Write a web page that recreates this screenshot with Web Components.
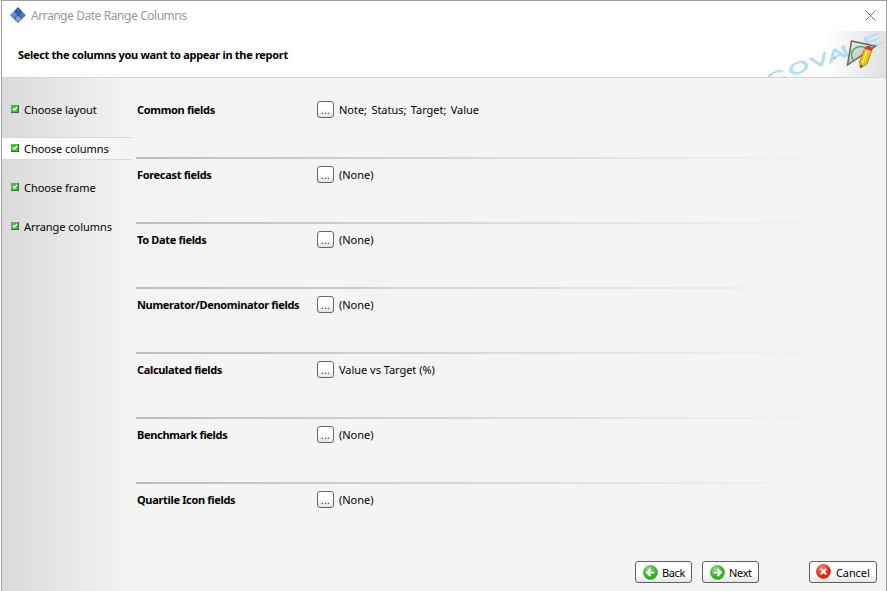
<!DOCTYPE html>
<html lang="en">
<head>
<meta charset="utf-8">
<title>Arrange Date Range Columns</title>
<style>
  body {
    margin: 0;
    background: #ffffff;
    font: 11px/16px "Noto Sans", "Open Sans", sans-serif;
    color: #000000;
    overflow: hidden;
  }
</style>
</head>
<body>
<wizard-window>
  <title-bar slot="title">Arrange Date Range Columns</title-bar>
  <wizard-banner slot="banner">Select the columns you want to appear in the report</wizard-banner>
  <wizard-step slot="steps">Choose layout</wizard-step>
  <wizard-step slot="steps" active>Choose columns</wizard-step>
  <wizard-step slot="steps">Choose frame</wizard-step>
  <wizard-step slot="steps">Arrange columns</wizard-step>
  <field-row label="Common fields" list>Note; Status; Target; Value</field-row>
  <field-row label="Forecast fields">(None)</field-row>
  <field-row label="To Date fields">(None)</field-row>
  <field-row label="Numerator/Denominator fields">(None)</field-row>
  <field-row label="Calculated fields">Value vs Target (%)</field-row>
  <field-row label="Benchmark fields">(None)</field-row>
  <field-row label="Quartile Icon fields">(None)</field-row>
  <wizard-button slot="buttons" icon="back">Back</wizard-button>
  <wizard-button slot="buttons" icon="next">Next</wizard-button>
  <wizard-button slot="buttons" icon="cancel">Cancel</wizard-button>
</wizard-window>

<script>
const define = (name, html, setup) => {
  const template = document.createElement('template');
  template.innerHTML = html;
  window.customElements.define(name, class extends HTMLElement {
    constructor() {
      super();
      this.attachShadow({mode: 'open'});
      this.shadowRoot.appendChild(template.content.cloneNode(true));
    }

    connectedCallback() {
      if (setup) setup(this, this.shadowRoot);
    }
  });
};

define('wizard-window', `
    <style>
      :host {
        display: grid;
        grid-template-rows: 30px 47px 1fr;
        box-sizing: border-box;
        height: 591px;
        margin-left: 1px;
        border: 1px solid #a0a0a0;
        border-bottom: 0;
        background: #f4f4f4;
      }
      .content { display: grid; grid-template-columns: 130px 1fr; }
      nav {
        display: flex;
        flex-direction: column;
        gap: 16px;
        padding-top: 20px;
        background: linear-gradient(to right, #dadada, #f4f4f4);
      }
      main { display: flex; flex-direction: column; padding: 16px 9px 8px 4px; }
      footer { display: flex; gap: 10px; margin-top: auto; justify-content: flex-end; }
      ::slotted([icon="cancel"]) { margin-left: 40px; }
    </style>
    <slot name="title"></slot>
    <slot name="banner"></slot>
    <div class="content">
      <nav><slot name="steps"></slot></nav>
      <main>
        <slot></slot>
        <footer><slot name="buttons"></slot></footer>
      </main>
    </div>`);

define('title-bar', `
    <style>
      :host {
        display: flex;
        align-items: center;
        padding: 0 10px 2px 8px;
        background: #ffffff;
        color: #999999;
        font-size: 12px;
      }
      span { flex: 1; margin-left: 5px; padding-top: 2px; letter-spacing: -0.48px; word-spacing: 0.3px; }
      svg { display: block; }
    </style>
    <svg width="16" height="16" viewBox="0 0 16 16">
      <path d="M8 .3 15.700 8 8 15.700 .3 8z" fill="#4576b8"/>
      <path d="M8 .3 12 4.200 8 8 4.200 4.200z" fill="#2c64b4"/>
      <path d="M4.100 4.200 8 8 4.100 11.800 .3 8z" fill="#5f92d2"/>
      <path d="M8 8l4 4-4 3.700L4.100 12z" fill="#7d9fcb"/>
      <path d="M4.500 5.500C6 5 7 6 8 8c1 2 2.500 3 4 2.500M10.500 4C11 6 10 7 8 8S5 10 5.500 12" fill="none" stroke="#1d488c" stroke-width=".8"/>
      <path d="M.5 8.300 8 15.600 15.500 8.300" fill="none" stroke="#777" stroke-width=".7"/>
    </svg>
    <span><slot></slot></span>
    <svg width="11" height="11" viewBox="0 0 11 11"><path d="M.5.5l10 10M10.500.5l-10 10" stroke="#777"/></svg>`);

define('wizard-banner', `
    <style>
      :host {
        display: flex;
        align-items: center;
        justify-content: space-between;
        box-sizing: border-box;
        padding-left: 16px;
        border-bottom: 1px solid #d4d4d4;
        background: #ffffff;
        font-weight: bold;
      }
      span { padding-top: 2px; letter-spacing: -0.31px; }
      svg { display: block; }
      text { font: 16px "Liberation Sans", sans-serif; fill: #b4def5; stroke: #b4def5; stroke-width: 0.7px; }
    </style>
    <span><slot></slot></span>
    <svg width="130" height="46" viewBox="0 0 130 46">
      <defs>
        <linearGradient id="shade"><stop stop-color="#fff"/><stop offset="1" stop-color="#e0e0e0"/></linearGradient>
        <linearGradient id="metal" x2="1" y2="1"><stop stop-color="#eee"/><stop offset="1" stop-color="#aaa"/></linearGradient>
      </defs>
      <path d="M70 0h60v46H70z" fill="url(#shade)"/>
      <text transform="translate(12 55) rotate(-22) scale(1.700 1)" x="0.500 14.500 28.300 38.500 47.500 61.500" y="0 0 1 2 2 3">COVALE</text>
      <circle cx="79" cy="27.500" r="1.300" fill="#f6a0a0"/>
      <path d="M95.500 10 119.500 15 91.500 34z" fill="url(#metal)" stroke="#666" stroke-width="1.500"/>
      <path d="M97 29C92 19 101 13 110 17" fill="none" stroke="#28b828" stroke-width="1.300"/>
      <path d="M108.500 18 115.500 20 111 33 104.500 37 103.500 31z" fill="#f5c400" stroke="#88640d" stroke-width=".7"/>
      <path d="M111 20 106.500 32" stroke="#fff06a" stroke-width="1.700"/>
      <path d="M108.500 18.500q1-4.500 5-3.500 4 1 2.500 5.500z" fill="#df3b25"/>
      <path d="M108.500 18.500 115.500 20.500" stroke="#d8d8d8"/>
      <path d="M104 33.500 107.500 35 104.500 37z" fill="#555"/>
    </svg>`);

define('wizard-step', `
    <style>
      :host {
        display: flex;
        align-items: center;
        gap: 5px;
        box-sizing: border-box;
        height: 23px;
        padding-left: 9px;
        border: solid transparent;
        border-width: 1px 0;
        letter-spacing: -0.05px;
        white-space: nowrap;
      }
      :host([active]) {
        border-color: #d8d8d8;
        background: linear-gradient(to right, #ffffff, #f4f4f4);
      }
      svg { display: block; margin-top: -2px; }
    </style>
    <svg width="8" height="8" viewBox="0 0 8 8">
      <path d="M0 0h8v8H0z" fill="#247b20"/>
      <path d="M0 0h7v7H0z" fill="#4fba42"/>
      <path d="M2 3.500 3.500 5 6 2" fill="none" stroke="#fff" stroke-width="1.300"/>
    </svg>
    <span><slot></slot></span>`);

define('field-row', `
    <style>
      :host {
        display: grid;
        grid-template-columns: 181px 17px 1fr;
        align-items: start;
        box-sizing: border-box;
        height: 65px;
        padding-top: 7px;
      }
      :host(:not(:nth-of-type(7))) {
        background: linear-gradient(to right, #bdbdbd, #f4f4f4) 0 100% / 686px 2px no-repeat;
      }
      :host([list]) span { word-spacing: 1.6px; }
      b { padding-left: 1px; letter-spacing: -0.33px; line-height: 18px; }
      button {
        width: 17px;
        height: 17px;
        padding: 0;
        border: 1px solid #666666;
        border-radius: 3px;
        background: linear-gradient(#ffffff 50%, #e4e4e4);
        color: #333333;
        font: 10px/12px "Noto Sans", sans-serif;
        letter-spacing: 0.5px;
      }
      span { padding-left: 5px; line-height: 18px; letter-spacing: -0.03px; }
    </style>
    <b></b>
    <button>...</button>
    <span><slot></slot></span>`, (host, root) => {
  root.querySelector('b').textContent = host.getAttribute('label');
});

const icons = {
  back: ['#35ad27', '#8ce070', 'M11.500 7.500H4M7.500 4 4 7.500 7.500 11'],
  next: ['#35ad27', '#8ce070', 'M3.500 7.500H11M7.500 4 11 7.500 7.500 11'],
  cancel: ['#d82a16', '#ff8b70', 'M4.700 4.700 10.300 10.300M10.300 4.700 4.700 10.300']
};

define('wizard-button', `
    <style>
      :host { display: block; }
      button {
        display: flex;
        align-items: center;
        gap: 4px;
        box-sizing: border-box;
        width: 57px;
        height: 22px;
        padding: 0 0 0 7px;
        border: 1px solid #606060;
        border-radius: 3px;
        background: linear-gradient(#ffffff 55%, #e6e6e6);
        font: inherit;
        color: inherit;
        letter-spacing: -0.35px;
      }
      :host([icon="cancel"]) button { gap: 5px; width: 68px; padding-left: 6px; letter-spacing: -0.1px; }
      svg { display: block; flex: none; }
      :host([icon="cancel"]) svg { margin-top: -2px; }
      span { padding-top: 2px; }
    </style>
    <button><svg width="15" height="15" viewBox="0 0 15 15"></svg><span><slot></slot></span></button>`, (host, root) => {
  const [fill, light, mark] = icons[host.getAttribute('icon')];
  root.querySelector('svg').innerHTML = `
    <radialGradient id="ball" cx=".35" cy=".25" r=".8"><stop stop-color="${light}"/><stop offset=".7" stop-color="${fill}"/></radialGradient>
    <circle cx="7.500" cy="7.500" r="7" fill="url(#ball)" stroke="${fill}" stroke-width=".7"/>
    <path d="${mark}" fill="none" stroke="#fff" stroke-width="1.900"/>`;
});
</script>
</body>
</html>
